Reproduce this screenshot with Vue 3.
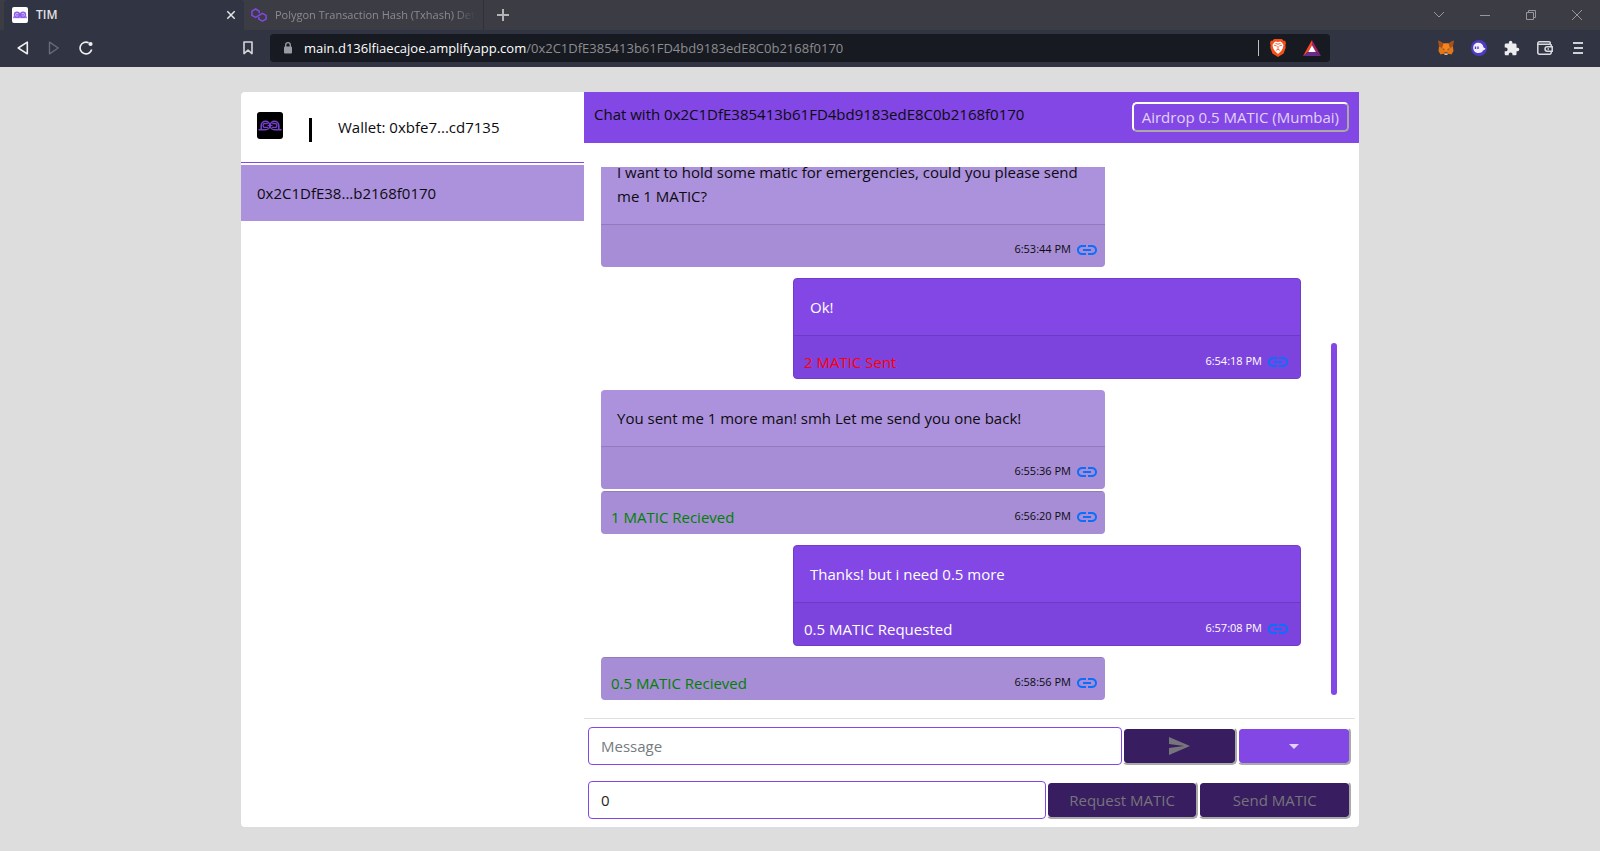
<script setup>
import { ref } from 'vue'

const address = '0x2C1DfE385413b61FD4bd9183edE8C0b2168f0170'
const message = ref('')
const amount = ref('0')

const messages = [
  { id: 1, text: 'I want to hold some matic for emergencies, could you please send me 1 MATIC?', time: '6:53:44 PM' },
  { id: 2, mine: true, text: 'Ok!', note: '2 MATIC Sent', kind: 'sent', time: '6:54:18 PM' },
  { id: 3, text: 'You sent me 1 more man! smh Let me send you one back!', time: '6:55:36 PM' },
  { id: 4, joined: true, note: '1 MATIC Recieved', kind: 'received', time: '6:56:20 PM' },
  { id: 5, mine: true, text: 'Thanks! but i need 0.5 more', note: '0.5 MATIC Requested', kind: 'requested', time: '6:57:08 PM' },
  { id: 6, note: '0.5 MATIC Recieved', kind: 'received', time: '6:58:56 PM' }
]
</script>

<template>
  <div class="page">
    <header class="browser">
      <div class="tabs">
        <div class="tab active">
          <svg class="favicon" viewBox="0 0 16 16" width="16" height="16" aria-hidden="true">
            <rect width="16" height="16" rx="2" fill="#fff" />
            <rect x="1" y="9.500" width="14" height="1.700" fill="#a77df0" />
            <g fill="#d9c6fa" stroke="#8f5be8" stroke-width="1.400">
              <circle cx="5" cy="7.700" r="2.500" /><circle cx="11" cy="7.700" r="2.500" />
              <path d="M4 7.900h8" />
            </g>
          </svg>
          <span class="tab-title">TIM</span>
          <button class="icon-btn tab-close" aria-label="Close tab">
            <svg viewBox="0 0 10 10" width="10" height="10"><path d="M1.3 1.3l7.4 7.4M8.7 1.3L1.3 8.7" stroke="#e4e4e6" stroke-width="1.5" /></svg>
          </button>
        </div>
        <div class="tab second">
          <svg viewBox="0 0 16 14" width="16" height="14" fill="none" stroke="#8247e5" stroke-width="1.5" stroke-linejoin="round" aria-hidden="true">
            <path d="M8.2 5.2V3.2L4.6 1 .9 3.2v4.1l3.7 2.1 6.8-4.1 3.7 2.1v3.7l-3.7 2.1-3.6-2.1V8.9" />
          </svg>
          <span class="tab-title faded">Polygon Transaction Hash (Txhash) Det</span>
        </div>
        <button class="icon-btn new-tab" aria-label="New tab">
          <svg viewBox="0 0 12 12" width="12" height="12"><path d="M6 0v12M0 6h12" stroke="#b4b4b8" stroke-width="2" /></svg>
        </button>
        <div class="window-controls">
          <button class="icon-btn" aria-label="Search tabs"><svg viewBox="0 0 10 10" width="10" height="10"><path d="M0 2l5 5 5-5" /></svg></button>
          <button class="icon-btn" aria-label="Minimize"><svg viewBox="0 0 10 10" width="10" height="10"><path d="M0 5.5h10" /></svg></button>
          <button class="icon-btn" aria-label="Restore"><svg viewBox="0 0 10 10" width="10" height="10"><path d="M.5 2.5h7v7h-7zM2.5 2.5v-2h7v7h-2" /></svg></button>
          <button class="icon-btn" aria-label="Close"><svg viewBox="0 0 10 10" width="10" height="10"><path d="M0 0l10 10M10 0L0 10" /></svg></button>
        </div>
      </div>

      <div class="toolbar">
        <div class="nav">
          <button class="icon-btn" aria-label="Back"><svg viewBox="0 0 12 14" width="12" height="14"><path d="M10.3 1.2v11.6L1.2 7z" fill="none" stroke="#f0f0f0" stroke-width="1.6" stroke-linejoin="round" /></svg></button>
          <button class="icon-btn" aria-label="Forward"><svg viewBox="0 0 12 14" width="12" height="14"><path d="M1.5 1.2v11.6L10.2 7z" fill="none" stroke="#686b78" stroke-width="1.4" stroke-linejoin="round" /></svg></button>
          <button class="icon-btn" aria-label="Reload"><svg viewBox="0 0 14 14" width="14" height="14"><path d="M9.600 1.700A5.900 5.900 0 1 0 12.700 8.500" fill="none" stroke="#f0f0f0" stroke-width="1.600" /><circle cx="11.500" cy="3" r="2.100" fill="#f0f0f0" /></svg></button>
        </div>
        <button class="icon-btn bookmark" aria-label="Bookmark"><svg viewBox="0 0 10 14" width="10" height="14"><path d="M1 1h8v11.6L5 9.2l-4 3.4z" fill="none" stroke="#d6d6da" stroke-width="1.6" stroke-linejoin="round" /></svg></button>
        <div class="address">
          <svg viewBox="0 0 8 12" width="8" height="12" aria-hidden="true"><rect y="4.5" width="8" height="7" rx="1" fill="#9a9ca3" /><path d="M1.7 5V3a2.3 2.3 0 0 1 4.6 0v2" fill="none" stroke="#9a9ca3" stroke-width="1.3" /></svg>
          <span class="url"><b>main.d136lfiaecajoe.amplifyapp.com</b>/{{ address }}</span>
          <span class="address-rule"></span>
          <svg viewBox="0 0 16 18" width="16" height="18" aria-hidden="true">
            <path d="M4 0h8l1.5 1.8 1.7-.1.8 2.8-.5 1 .1 3.6-2 5.3L8 18l-5.6-3.6-2-5.3.1-3.6-.5-1 .8-2.8 1.7.1z" fill="#f4511a" />
            <path d="M5.5 2.6L8 3l2.5-.4 1.6 1.1 1.4 2.2-.8 3.5-1.5 2.6L8 15l-3.2-3-1.5-2.6-.8-3.5 1.4-2.2z" fill="#fff" />
            <path d="M4 6.2l2.7.8M12 6.2L9.3 7M8 7v3M6.2 11.3L8 10.3l1.8 1M5.5 4.5L8 5.2l2.5-.7" stroke="#f4511a" stroke-width=".9" fill="none" />
          </svg>
          <svg class="bat" viewBox="0 0 18 16" width="18" height="16" aria-hidden="true">
            <path d="M9 0l9 16-6-4.5L9 5z" fill="#9e1f63" /><path d="M0 16h18l-5.5-4h-7z" fill="#662d91" /><path d="M0 16L9 0v5l-4 7z" fill="#ff4724" /><path d="M9 5.3l3.8 6.7H5.2z" fill="#fff" />
          </svg>
        </div>
        <div class="extensions">
          <svg viewBox="0 0 16 16" width="16" height="16" aria-label="MetaMask">
            <path d="M.5.5l5 3h5l5-3-.6 6 .6 4.5-2 3.5-3-.8-1.5 1.3H7l-1.500-1.300-3 .8-2-3.500L1 6.500z" fill="#e2761b" />
            <path d="M.5.5l5 3L4 8 1 6.500zM15.500.5l-5 3L12 8l3-1.500z" fill="#a7521c" />
            <path d="M5.500 3.500h5L11.500 9 8 11 4.500 9z" fill="#f6851b" />
            <path d="M4.300 8.600l2.200.3-.4 1.100zM11.700 8.600l-2.200.3.4 1.100zM6.500 12.500h3l.3 1H6.200z" fill="#233447" />
            <path d="M6.200 13.500h3.600L9 15H7z" fill="#d7c1b3" />
          </svg>
          <svg viewBox="0 0 16 16" width="16" height="16" aria-label="Phantom">
            <circle cx="8" cy="8" r="8" fill="#4e3bc4" />
            <path d="M2.200 7.800C2.200 4.800 4.400 2.800 7.300 2.800c3 0 4.600 1.700 5.200 4.400.3 1 1.700.5 1.900 1.400.1 1.300-1.900 1.600-2.400 2-1 1.900-2.700 2.600-4.700 2.500-3-.1-5.100-2.200-5.100-5.300z" fill="#f4f0ff" />
            <path d="M4.500 6.600v2.300M7 6.600v2.300" stroke="#4e3bc4" stroke-width="1.400" />
          </svg>
          <svg viewBox="1 0 23 23" width="16" height="16" aria-label="Extensions"><path d="M20.500 11H19V7c0-1.100-.9-2-2-2h-4V3.500a2.500 2.500 0 0 0-5 0V5H4c-1.100 0-2 .9-2 2v3.800h1.500a2.700 2.700 0 0 1 0 5.400H2V20c0 1.100.9 2 2 2h3.800v-1.500a2.700 2.700 0 0 1 5.400 0V22H17c1.100 0 2-.9 2-2v-4h1.500a2.500 2.500 0 0 0 0-5z" fill="#ececee" /></svg>
          <svg viewBox="0 0 16 14" width="16" height="14" fill="none" stroke="#dcdce0" stroke-width="1.500" aria-label="Wallet"><path d="M14.200 10.800v.9a1.500 1.500 0 0 1-1.500 1.500H2.300A1.500 1.500 0 0 1 .8 11.700V2.300A1.500 1.500 0 0 1 2.300.8h9.900a1 1 0 0 1 1 1v1.400M1 3.200h12.200a1 1 0 0 1 1 1v1.300" /><path d="M15.200 5.800v4.400h-5a2.200 2.200 0 0 1 0-4.400zM10.500 8h1.500" /></svg>
          <button class="icon-btn menu" aria-label="Menu"><svg viewBox="0 0 10 12" width="10" height="12"><path d="M0 1h10M1 6h9M0 11h10" stroke="#d0d1d6" stroke-width="2" /></svg></button>
        </div>
      </div>
    </header>

    <main class="stage">
      <div class="card">
        <aside class="sidebar">
          <div class="profile">
            <svg class="logo" viewBox="0 0 26 27" width="26" height="27" role="img" aria-label="TIM">
              <rect width="26" height="27" rx="3" fill="#000" />
              <g fill="none" stroke="#7440cc" stroke-width="1.600">
                <path d="M1.500 17.800h7a4.300 4.300 0 1 0-4.300-4.300v4.300M24.500 17.800h-7a4.300 4.300 0 1 1 4.300-4.300v4.300" />
                <path d="M10.800 11.500H8a1.900 1.900 0 0 0 0 3.800h3M15.200 11.500H18a1.900 1.900 0 0 1 0 3.800h-3" stroke-width="1.300" />
                <path d="M10.500 13.500h5" stroke-width="1" />
              </g>
            </svg>
            <span class="bar"></span>
            <span>Wallet: 0xbfe7...cd7135</span>
          </div>
          <button class="contact">0x2C1DfE38...b2168f0170</button>
        </aside>

        <section class="chat">
          <header class="chat-head">
            <span>Chat with {{ address }}</span>
            <button class="btn airdrop">Airdrop 0.5 MATIC (Mumbai)</button>
          </header>

          <div class="history">
            <div class="messages">
              <article v-for="m in messages" :key="m.id" class="bubble" :class="{ mine: m.mine, joined: m.joined }">
                <p v-if="m.text" class="body">{{ m.text }}</p>
                <footer class="foot">
                  <span class="note" :class="m.kind">{{ m.note }}</span>
                  <time>{{ m.time }}</time>
                  <a href="#" aria-label="View transaction">
                    <svg viewBox="0 0 24 24" width="24" height="24"><path fill="currentColor" d="M3.900 12c0-1.710 1.390-3.100 3.100-3.100h4V7H7c-2.760 0-5 2.240-5 5s2.240 5 5 5h4v-1.900H7c-1.710 0-3.100-1.390-3.100-3.100zM8 13h8v-2H8v2zm9-6h-4v1.900h4c1.710 0 3.100 1.390 3.100 3.100s-1.390 3.100-3.100 3.100h-4V17h4c2.760 0 5-2.240 5-5s-2.240-5-5-5z" /></svg>
                  </a>
                </footer>
              </article>
            </div>
            <div class="scroll-thumb"></div>
          </div>

          <form class="composer" @submit.prevent>
            <div class="row message-row">
              <input v-model="message" type="text" placeholder="Message" aria-label="Message" />
              <button class="btn" disabled aria-label="Send message">
                <svg viewBox="0 0 21 18" width="21" height="18"><path d="M0 18l21-9L0 0v7l15 2-15 2z" fill="currentColor" /></svg>
              </button>
              <button class="btn" type="button" aria-label="Toggle payment options">
                <svg viewBox="0 0 10 5" width="10" height="5"><path d="M0 0h10L5 5z" fill="currentColor" /></svg>
              </button>
            </div>
            <div class="row amount-row">
              <input v-model="amount" type="text" inputmode="decimal" aria-label="MATIC amount" />
              <button class="btn" disabled>Request MATIC</button>
              <button class="btn" disabled>Send MATIC</button>
            </div>
          </form>
        </section>
      </div>
    </main>
  </div>
</template>

<style>
body { background: #ddd; }
</style>

<style scoped>
* { box-sizing: border-box; }
.page {
  height: 100vh;
  display: flex;
  flex-direction: column;
  font: 15px/24px "Open Sans", "Noto Sans", sans-serif;
  color: #0c0b10;
}
button, input { font: inherit; }
svg { display: block; flex: none; }
.icon-btn { display: flex; padding: 0; border: 0; background: none; }

.browser { background: #313442; font-size: 11px; }
.tabs { height: 30px; display: flex; align-items: center; background: #3c3c44; padding-left: 4px; }
.tab { width: 240px; height: 30px; display: flex; align-items: center; gap: 8px; padding: 0 8px; }
.tab.active { background: #313442; border-radius: 4px 4px 0 0; color: #e2e2e5; font-size: 12px; font-weight: 600; }
.tab-close { margin-left: auto; }
.tab.second { border-right: 1px solid #303036; padding: 0 0 0 7px; color: #8b8b90; }
.tab-title { white-space: nowrap; }
.faded { mask-image: linear-gradient(90deg, #000 90%, transparent); }
.new-tab { margin-left: 13px; }
.window-controls { margin-left: auto; display: flex; gap: 36px; padding-right: 18px; }
.window-controls path { fill: none; stroke: #96969b; stroke-width: 1; }

.toolbar { height: 37px; display: flex; align-items: center; padding: 0 17px 1px; }
.nav { display: flex; gap: 19px; width: 226px; }
.address {
  flex: 1;
  height: 28px;
  margin-left: 17px;
  padding: 0 9px 0 14px;
  display: flex;
  align-items: center;
  border-radius: 4px;
  background: #171a21;
  color: #8c8d90;
  font-size: 13px;
}
.url { flex: 1; margin-left: 12px; white-space: nowrap; }
.url b { font-weight: 400; color: #fff; }
.address-rule { width: 1px; height: 16px; margin-right: 11px; background: #c0c0c4; }
.bat { margin-left: 17px; }
.extensions { display: flex; align-items: center; gap: 17px; margin-left: 108px; }
.menu { margin-left: 3px; }

.stage { flex: 1; min-height: 0; padding: 25px 241px 24px; display: flex; }
.card { flex: 1; min-width: 0; display: flex; background: #fff; border-radius: 4px; }
.sidebar { flex: 343 1 0; }
.profile { height: 71px; padding: 0 16px; display: flex; align-items: center; border-bottom: 1px solid #8247e5; }
.logo { margin-bottom: 3px; }
.bar { width: 3px; height: 24px; margin: 6px 26px 0; background: #000; }
.contact { width: 100%; height: 56px; margin-top: 2px; padding: 0 16px; border: 0; background: #ac92dc; color: inherit; text-align: left; }

.chat { flex: 775 1 0; min-width: 0; display: flex; flex-direction: column; }
.chat-head { height: 51px; display: flex; align-items: flex-start; justify-content: space-between; padding: 10px 10px 0; background: #8247e5; }
.btn {
  display: flex;
  align-items: center;
  justify-content: center;
  padding: 0 6px;
  border: 2px solid;
  border-color: #fff #a9a9a9 #a9a9a9 #fff;
  border-radius: 5px;
  background: #8247e5;
  background-clip: padding-box;
  color: #e0d2f8;
}
.btn:disabled { background-color: #381e61; color: #77747b; }
.airdrop { height: 30px; padding: 0 8px; white-space: nowrap; }

.history { flex: 1; min-height: 0; margin-top: 24px; display: flex; position: relative; }
.messages { flex: 1; overflow: hidden; display: flex; flex-direction: column; justify-content: flex-end; padding: 0 58px 0 17px; }
.bubble { flex: none; width: 72%; margin: 11px auto 0 0; border-radius: 4px; background: #ac92dc; overflow: hidden; }
.bubble.joined { margin-top: 2px; }
.bubble.mine { width: 508px; max-width: 90%; margin: 11px 0 0 auto; border: 1px solid #713dc8; background: #8247e5; color: #fff; }
.body { margin: 0; padding: 16px; }
.foot { height: 43px; padding: 0 6px 5px 10px; display: flex; align-items: flex-end; border-top: 1px solid rgba(0, 0, 0, 0.125); background: rgba(0, 0, 0, 0.03); }
.mine .foot { padding: 0 10px 4px; }
.note { flex: 1; }
.sent { color: #f00; }
.received { color: #008000; }
.foot time { font-size: 11px; margin: 0 4px 1px 0; }
.foot a { color: #0d6efd; }
.scroll-thumb { position: absolute; right: 22px; top: 33%; bottom: 5px; width: 6px; border-radius: 3px; background: #8247e5; }

.composer { margin: 18px 4px 0 0; padding: 8px 4px; border-top: 1px solid #dee0e2; display: flex; flex-direction: column; gap: 16px; }
.row { display: grid; }
.message-row { grid-template-columns: 70fr 15fr 15fr; }
.amount-row { grid-template-columns: 60fr 20fr 20fr; }
.row input { width: 100%; min-width: 0; height: 38px; padding: 0 12px; border: 1px solid #8247e5; border-radius: 4px; background: #fff; color: #212529; }
.row input::placeholder { color: #757b81; opacity: 1; }
</style>
